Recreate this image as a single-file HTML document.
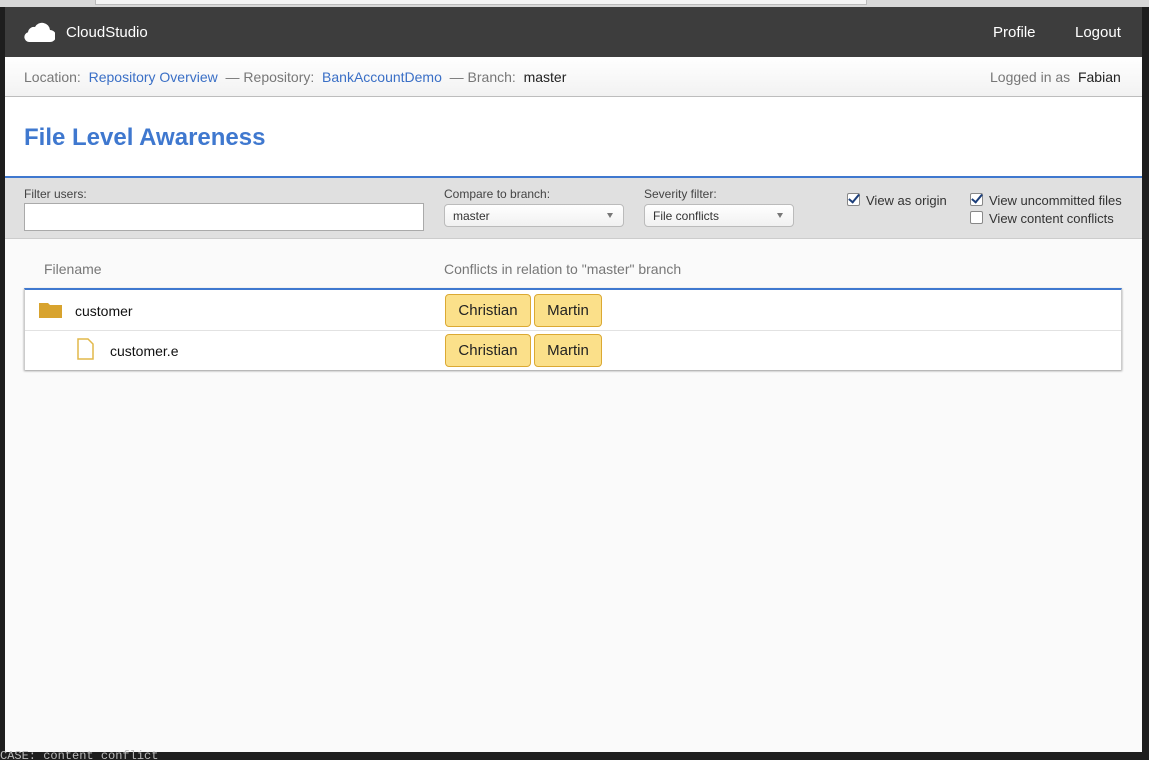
<!DOCTYPE html>
<html><head><meta charset="utf-8"><style>
html,body{margin:0;width:1149px;height:760px;overflow:hidden}
body{background:#1e1e1e;position:relative;font-family:"Liberation Sans",sans-serif}
.top{position:absolute;left:0;top:0;width:1149px;height:7px;background:#d8d8d8}
.top div{position:absolute;left:95px;top:0;width:770px;height:4px;background:#f4f4f4;border:1px solid #bbb;border-top:0}
.win{position:absolute;left:5px;top:7px;width:1137px;height:745px;background:#fafafa;overflow:hidden}
.hdr{position:absolute;left:0;top:0;width:100%;height:50px;background:#3d3d3d;color:#fff;font-size:15px}
.bc{position:absolute;top:50px;left:0;width:100%;height:39px;background:linear-gradient(#fff,#f2f2f2);border-bottom:1px solid #bdbdbd;font-size:14px;color:#777}
.bc span{position:absolute;top:12px}
a{color:#3a6fc6;text-decoration:none}
.ttl{position:absolute;top:90px;left:0;width:100%;height:79px;background:#fff;border-bottom:2px solid #3f78cf}
.ttl h1{margin:0;position:absolute;left:19px;top:27px;font-size:24px;color:#3f78cf;font-weight:bold}
.fb{position:absolute;top:171px;left:0;width:100%;height:60px;background:#e0e0e0;border-bottom:1px solid #ccc;font-size:12px;color:#444}
.lbl{position:absolute;top:9px}
.inp{position:absolute;left:19px;top:25px;width:398px;height:26px;background:#fff;border:1px solid #aaa}
.sel{position:absolute;top:26px;height:23px;border:1px solid #bbb;border-radius:4px;background:linear-gradient(#fff,#f1f1f1);font-size:12px;color:#333;line-height:23px;padding-left:8px;box-sizing:border-box}
.sel i{position:absolute;right:10px;top:8px;border:3px solid transparent;border-top:5px solid #777;border-bottom:0}
.cb{position:absolute;font-size:13px;color:#333}
.cb b{display:inline-block;width:11px;height:11px;border:1px solid #888;border-radius:2px;background:#fff;vertical-align:-1px;margin-right:6px;position:relative}
.cb b.c:after{content:"";position:absolute;left:3px;top:-2px;width:4px;height:9px;border:solid #1d3f7a;border-width:0 2px 2px 0;transform:rotate(40deg)}
.th{position:absolute;top:254px;font-size:14px;color:#777}
.tbl{position:absolute;left:19px;top:281px;width:1096px;height:80px;background:#fff;border-top:2px solid #3f78cf;box-shadow:0 1px 2px #999;border-left:1px solid #ccc;border-right:1px solid #ccc}
.row{position:absolute;left:0;width:100%;height:40px;font-size:14px;color:#111}
.tag{position:absolute;top:4px;height:33px;background:#fbe08a;border:1px solid #dba933;border-radius:4px;box-sizing:border-box;font-size:15px;line-height:31px;text-align:center;color:#222}
.bot{position:absolute;left:0;top:749px;font-family:"Liberation Mono",monospace;font-size:12px;color:#bbb}
</style></head><body>
<div class="top"><div></div></div>
<div class="win">
<div class="hdr">
<svg style="position:absolute;left:19px;top:15px" width="31" height="20" viewBox="0 0 31 20"><path d="M5 20a5 5 0 0 1-1-9.8A6 6 0 0 1 11 5a8 8 0 0 1 15 3a6 6 0 0 1 0 12z" fill="#fff"/></svg>
<span style="position:absolute;left:61px;top:17px">CloudStudio</span>
<span style="position:absolute;left:988px;top:17px">Profile</span>
<span style="position:absolute;left:1070px;top:17px">Logout</span>
</div>
<div class="bc"><span style="left:19px">Location:&nbsp; <a>Repository Overview</a> &nbsp;— Repository:&nbsp; <a>BankAccountDemo</a> &nbsp;— Branch:&nbsp; <b style="font-weight:normal;color:#222">master</b></span>
<span style="left:985px">Logged in as&nbsp; <b style="font-weight:normal;color:#222">Fabian</b></span></div>
<div class="ttl"><h1>File Level Awareness</h1></div>
<div class="fb">
<span class="lbl" style="left:19px">Filter users:</span><div class="inp"></div>
<span class="lbl" style="left:439px">Compare to branch:</span><div class="sel" style="left:439px;width:180px">master<i></i></div>
<span class="lbl" style="left:639px">Severity filter:</span><div class="sel" style="left:639px;width:150px">File conflicts<i></i></div>
<span class="cb" style="left:842px;top:15px"><b class="c"></b>View as origin</span>
<span class="cb" style="left:965px;top:15px"><b class="c"></b>View uncommitted files</span>
<span class="cb" style="left:965px;top:33px"><b></b>View content conflicts</span>
</div>
<span class="th" style="left:39px">Filename</span>
<span class="th" style="left:439px">Conflicts in relation to "master" branch</span>
<div class="tbl">
<div class="row" style="top:0;border-bottom:1px solid #e2e2e2">
<svg style="position:absolute;left:14px;top:13px" width="23" height="15"><path d="M0 0h9l2 2h12v13H0z" fill="#d8a32e"/></svg>
<span style="position:absolute;left:50px;top:13px">customer</span>
<div class="tag" style="left:420px;width:86px">Christian</div><div class="tag" style="left:509px;width:68px">Martin</div></div>
<div class="row" style="top:41px">
<svg style="position:absolute;left:52px;top:7px" width="17" height="22"><path d="M1 1h10l5 5v15H1z" fill="#fff" stroke="#e2b84a" stroke-width="1.5"/></svg>
<span style="position:absolute;left:85px;top:12px">customer.e</span>
<div class="tag" style="left:420px;width:86px;top:3px">Christian</div><div class="tag" style="left:509px;width:68px;top:3px">Martin</div></div>
</div>
</div>
<div class="bot">CASE: content conflict</div>
</body></html>
